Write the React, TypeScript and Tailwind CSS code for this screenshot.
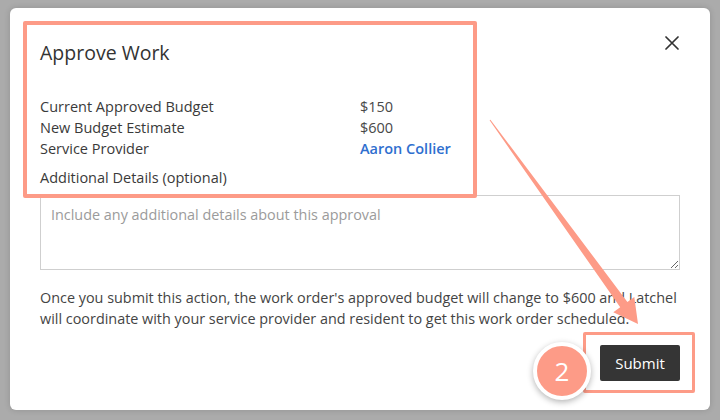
import React from 'react'

const rows = [
  { label: 'Current Approved Budget', value: '$150' },
  { label: 'New Budget Estimate', value: '$600' },
  { label: 'Service Provider', value: 'Aaron Collier', link: true },
]

function CloseIcon() {
  return (
    <svg width="14" height="14" viewBox="0 0 14 14" fill="none" stroke="#333" strokeWidth="1.7" strokeLinecap="round">
      <path d="M1 1 L13 13 M13 1 L1 13" />
    </svg>
  )
}

// tapered annotation arrow, drawn in page coordinates
function Arrow() {
  return (
    <svg className="pointer-events-none absolute left-0 top-0" width="720" height="420" viewBox="0 0 720 420">
      <polygon
        fill="#fd9b87"
        points="489.6,120.3 620.2,307.3 613.3,312.3 638,324 634.3,296.9 627.4,301.9 490.4,119.7"
      />
    </svg>
  )
}

export default function App() {
  return (
    <div
      className="relative h-[420px] w-[720px] overflow-hidden bg-[#ababab] px-[10px] pt-[8px]"
      style={{ fontFamily: '"Open Sans", "Noto Sans", sans-serif' }}
    >
      <div className="relative flex h-[402px] flex-col rounded-[6px] bg-white px-[30px] pt-[33px] shadow-[0_0_6px_rgba(0,0,0,0.15)]">
        <button className="absolute right-[31px] top-[28px]">
          <CloseIcon />
        </button>

        <h2 className="text-[19.5px] leading-[24px] text-[#333]">Approve Work</h2>

        <div className="mt-[31px] flex flex-col text-[14.5px] leading-[21px] text-[#3a3a3a]">
          {rows.map((r) => (
            <div key={r.label} className="flex">
              <span className="w-[320px]">{r.label}</span>
              <span className={r.link ? 'font-semibold text-[#2f6fcf]' : 'text-[#484848]'}>{r.value}</span>
            </div>
          ))}
        </div>

        <label className="mt-[8px] text-[14.5px] leading-[21px] text-[#3a3a3a]">Additional Details (optional)</label>

        <textarea
          className="mt-[7px] h-[75px] w-full border border-[#cfcfcf] px-[10px] pt-[8px] text-[14.4px] leading-[21px] text-[#333] outline-none placeholder:text-[#9b9b9b]"
          placeholder="Include any additional details about this approval"
        />

        <p className="mt-[17px] text-[14.4px] leading-[21px] text-[#444]">
          Once you submit this action, the work order's approved budget will change to $600 and Latchel
          <br />
          will coordinate with your service provider and resident to get this work order scheduled.
        </p>

        <div className="mt-[16px] flex justify-end">
          <button className="h-[36px] w-[80px] rounded-[2px] bg-[#353535] text-[15px] text-white">Submit</button>
        </div>
      </div>

      {/* annotations */}
      <div className="pointer-events-none absolute left-[23px] top-[21px] h-[177px] w-[454px] rounded-[2px] border-[4px] border-[#fd9b87]" />
      <div className="pointer-events-none absolute left-[583px] top-[332px] h-[61px] w-[112px] rounded-[2px] border-[3px] border-[#fd9b87]" />
      <Arrow />
      <div className="absolute left-[533px] top-[342px] flex h-[58px] w-[58px] items-center justify-center rounded-full border-[4px] border-white bg-[#fd9b87] text-[26px] font-medium text-white shadow-[0_2px_6px_rgba(0,0,0,0.3)]">
        2
      </div>
    </div>
  )
}
